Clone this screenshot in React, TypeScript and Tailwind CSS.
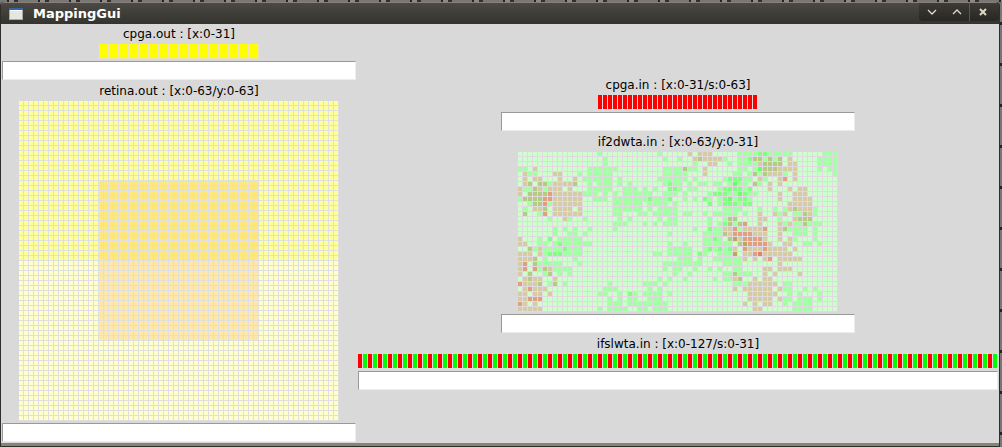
import type { ReactNode } from "react";

const CELL = 5;

const TONES: Record<string, string> = {
  ".": "#ccffcc",
  g: "#a3ffa3",
  G: "#80ff80",
  H: "#66ff66",
  t: "#d6cca3",
  o: "#b3cc80",
  d: "#b8a860",
  r: "#e0a080",
  R: "#e68066",
};

// One line per row of the if2dwta map: a tone followed by the columns it fills.
const WTA_ROWS = [
  "g16 g28 t34 t36-38 g44-47 G48-49 g50-54 g61-63",
  "g17 g29 g32 t35 o36 t37-40 g41 g44-45 G46 o47-48 g49 o50 g51 o52 t54 g60-63",
  "g17 g35 t38-39 g42 g44-47 t48 o49-52 t54-55 g60-63",
  "g0-1 t3 g14-19 g29-32 o33 g34-35 t37 g44-45 g47 H48 o49-51 t52-55 g60 g62-63",
  "t1 g2-3 t7-8 g12 g14-18 g29-33 t37 g43-44 g46 o47 g48 o49 t50-52 g53 t55 g63",
  "t1 t3-4 t8 t11 g13-18 g20 g28-33 g35 g41 G42-44 g45-46 t48 g49 t52 r53 t55",
  "t1 o2 o4-5 g6 t7-9 t10 o11 g14 g16-18 g20 g22 g29 G30 g31-32 g34 g36-37 g39-40 g42 H43 g44-45 o47 g48 t50 t52",
  "t0 g1-2 o3 t4 g5 t6-8 t10 g14-18 g21-23 g25 g27 G30-31 g32 g34-35 g40 G41-44 g45 G46 t50 t54 t56-57",
  "t0 o2-5 r6 t7-12 g13-15 g17 g19 g21-26 g29-31 g33 g38 G39-41 g42-43 H44 G45 g46-47 t52 t55-57",
  "g0 o1-4 r5-6 t7-12 g15-17 g19-25 G26 g27-29 G30 g33 g35 G37 g38 g40 G41 H42 g43 G44-45 g46 t52 t55-58",
  "g2 o3-4 r5 g6 t7-12 g19-24 g26-29 g31 G38 g40 G41-43 g44 G45-46 t54-58",
  "g1 t3-4 o5 t7-10 t12 g19-24 g26 g28-31 g41-44 g48 g51 g53 t54 o55 t56-58 g59",
  "o1 g4 r5 t7-12 g19-20 g24-25 g27-31 g33-34 g37 g39-43 g45 t48 t51 g52 t53 g55-56 o57 t58 g59",
  "g6 t9 g10 g13 g20 g22 g28 g30-31 g38 g41 o42-43 t48-49 g52 t55 o56-58",
  "g19-21 g25 g27 g29-31 g38 g40 G41 o42 g43 o44 r45 t48 t52 g53 t54 g55-56 o57 g58-60",
  "g7 g9 g11 g14 g19 g35 G38 g39-40 t41-42 r43 g44 t45-48 r49 t52 o53 g54-57 g59",
  "g7 g10-11 g13 g30 g37-40 o41 t42 r43-46 t47-49 t52 g55-57 g59",
  "t0 g4 G6 g8-12 g37-38 G39 g40 o42 d43 t44 r45-48 t49 t52 t54 g55 g59",
  "t0-1 g4-5 g7 G8 g9-14 g30 g33 g37-42 o44 d45 r46-49 t50 t53-54 g57-58 g60",
  "o2 g3 t4 g5-8 G9 g10-12 g30-34 g37 G38 g39 G40 g41 G42 t43 r45 t46-48 r49 t50-53 t55",
  "t0-2 t4 g5 G6-8 g9-12 g27-28 g30-34 G36 g37 g40-42 d43 t45-46 r47 R48 t49-54",
  "t0-2 o3 g5 g11 g32-34 g36 g39-44 t45 t47 t49 r50 t52-56",
  "t0 r1 o3 g4-8 g12 g29-36 g41-44 t52",
  "t0 r1 r3 g4 o5 t6 g7-10 g29 g31-32 g35 g38 g40 g43-44 t49-50 t52-54",
  "t0 o2 g5 o6 g8 g10 g31 g34 g41-42 o43 g44-46 t49 t51 t56",
  "t1 o2 t3-4 t7 g28 g30 g33 g39 g41-42 t43 o44 t47 t49-50",
  "r0 t1-3 o4 g6 o7 g9 g18 g25-27 g29 g43-45 t46-48 t49-51 g53-54",
  "t1 r2 t3-5 g17-19 g26 g28 t43 t45-50 t52 g53-54 g57 g59",
  "t0-1 t3-4 t6 g16-17 g20 G22 g23 g25-28 g30 t46-51 g54 g56 g60",
  "t0-1 r2-4 g18 g20 g22-23 g26-28 t46-50 t52 g53-54 g56-58 g60",
  "r0 t1 t3 g18-20 g22-25 g26-29 t45 t47 t49-50 g53 g55-58",
  "t0-4 g16 g18-21 g24-25 g27-29 t47-48 g55-58",
];

function expandRow(row: string): string[] {
  const cells = new Array<string>(64).fill(".");
  for (const run of row.split(" ")) {
    const [from, to = from] = run.slice(1).split("-").map(Number);
    cells.fill(run[0], from, to + 1);
  }
  return cells.map((tone) => TONES[tone]);
}

const WTA_MAP = WTA_ROWS.map(expandRow);

function retinaTone(x: number, y: number) {
  const upper = y < 32;
  const centre = x >= 16 && x < 48 && y >= 16 && y < 48;
  if (centre) return upper ? "#ffe87a" : "#ffe8a6";
  return upper ? "#ffff99" : "#ffffcc";
}

const RETINA_MAP = Array.from({ length: 64 }, (_, y) =>
  Array.from({ length: 64 }, (_, x) => retinaTone(x, y)),
);

function CellMap({ rows, gap, label }: { rows: string[][]; gap: string; label: string }) {
  const width = rows[0].length * CELL;
  const height = rows.length * CELL;
  return (
    <svg
      role="img"
      aria-label={label}
      width={width}
      height={height}
      viewBox={`0 0 ${width} ${height}`}
      shapeRendering="crispEdges"
      className="block"
    >
      <rect width={width} height={height} fill={gap} />
      {rows.map((row, y) =>
        row.map((fill, x) => (
          <rect key={`${x}-${y}`} x={x * CELL} y={y * CELL} width={4} height={4} fill={fill} />
        )),
      )}
    </svg>
  );
}

function CellBar({ count, tones, gap, label }: { count: number; tones: string[]; gap: string; label: string }) {
  const width = count * CELL;
  return (
    <svg
      role="img"
      aria-label={label}
      width={width}
      height={15}
      viewBox={`0 0 ${width} 15`}
      shapeRendering="crispEdges"
      className="block"
    >
      <rect width={width} height={15} fill={gap} />
      {Array.from({ length: count }, (_, i) => (
        <rect key={i} x={i * CELL} y={0} width={4} height={14} fill={tones[i % tones.length]} />
      ))}
    </svg>
  );
}

function Panel({ id, title, wide = false, children }: { id: string; title: string; wide?: boolean; children: ReactNode }) {
  return (
    <section className={wide ? "flex w-full flex-col items-center" : "flex w-full max-w-[354px] flex-col items-center"}>
      <label htmlFor={id} className="h-5 text-[12px] leading-5 whitespace-nowrap text-black">
        {title}
      </label>
      {children}
      <input
        id={id}
        type="text"
        className="mt-0.5 mb-px h-[19px] w-full border border-t-[#999999] border-r-[#ececec] border-b-[#ececec] border-l-[#999999] bg-white px-1 text-[12px] outline-none"
      />
    </section>
  );
}

function TitleBar() {
  return (
    <header className="flex h-[22px] items-center rounded-t border-t border-[#8b8079] bg-linear-to-b from-[#4a4943] to-[#34332e] pl-2">
      <svg width="14" height="12" viewBox="0 0 14 12" shapeRendering="crispEdges" aria-hidden="true">
        <rect width="14" height="12" fill="#a9aba5" />
        <rect x="1" y="1" width="12" height="10" fill="#e4e6e0" />
        <rect x="0" y="0" width="14" height="2" fill="#3465a4" />
        <rect x="1" y="2" width="12" height="1" fill="#ffffff" />
      </svg>
      <h1 className="ml-2.5 flex-1 text-[13px] leading-5 font-bold text-white">MappingGui</h1>
      <div className="flex h-[18px] items-center self-start rounded-b bg-linear-to-b from-[#3c3b36] to-[#282723] text-[#dfd8c8]">
        <button type="button" aria-label="Minimize" className="flex h-full w-[25px] items-center justify-center">
          <svg width="10" height="10" viewBox="0 0 10 10" fill="none" stroke="currentColor" strokeWidth="1.3">
            <path d="M1 3 L5 7 L9 3" />
          </svg>
        </button>
        <button type="button" aria-label="Maximize" className="flex h-full w-[25px] items-center justify-center">
          <svg width="10" height="10" viewBox="0 0 10 10" fill="none" stroke="currentColor" strokeWidth="1.3">
            <path d="M1 7 L5 3 L9 7" />
          </svg>
        </button>
        <button
          type="button"
          aria-label="Close"
          className="flex h-full w-[30px] items-center justify-center border-l border-[#5a5852] pr-1"
        >
          <svg width="10" height="10" viewBox="0 0 10 10" fill="none" stroke="currentColor" strokeWidth="2">
            <path d="M2 2 L8 8 M8 2 L2 8" />
          </svg>
        </button>
      </div>
    </header>
  );
}

export default function App() {
  return (
    <div className="flex min-h-screen flex-col bg-[#777777]">
      <div className="h-0.5 bg-[repeating-linear-gradient(90deg,#777777_0_7px,#242424_7px_9px,#8a8a8a_9px_14px,#303030_14px_18px,#777777_18px_31px)]" />
      <div className="flex-1 bg-[repeating-linear-gradient(180deg,#777777_0_20px,#242424_20px_23px,#777777_23px_41px)] pr-0.5 font-['DejaVu_Sans',sans-serif]">
        <div className="flex min-h-[445px] flex-col rounded-t border-x border-[#2f2e2a] bg-[#2f2e2a]">
          <TitleBar />
          <main className="flex flex-1 gap-0.5 bg-[#d9d9d9] px-px">
            <div className="flex flex-[354] flex-col items-center">
              <Panel id="cpga-out" title="cpga.out : [x:0-31]">
                <CellBar label="cpga.out" count={32} tones={["#ffff00"]} gap="#ebe3bd" />
              </Panel>
              <Panel id="retina-out" title="retina.out : [x:0-63/y:0-63]">
                <CellMap label="retina.out" rows={RETINA_MAP} gap="#e0dfdf" />
              </Panel>
            </div>
            <div className="flex flex-[640] flex-col items-center justify-center pb-px">
              <Panel id="cpga-in" title="cpga.in : [x:0-31/s:0-63]">
                <CellBar label="cpga.in" count={32} tones={["#ff0000"]} gap="#dfdadf" />
              </Panel>
              <Panel id="if2dwta-in" title="if2dwta.in : [x:0-63/y:0-31]">
                <CellMap label="if2dwta.in" rows={WTA_MAP} gap="#e0dae0" />
              </Panel>
              <Panel id="ifslwta-in" title="ifslwta.in : [x:0-127/s:0-31]" wide>
                <CellBar label="ifslwta.in" count={128} tones={["#ff0000", "#00ff00"]} gap="#dfdadf" />
              </Panel>
            </div>
          </main>
          <footer className="h-1 border-b border-[#2f2e2a] bg-[#888375]" />
        </div>
      </div>
    </div>
  );
}
